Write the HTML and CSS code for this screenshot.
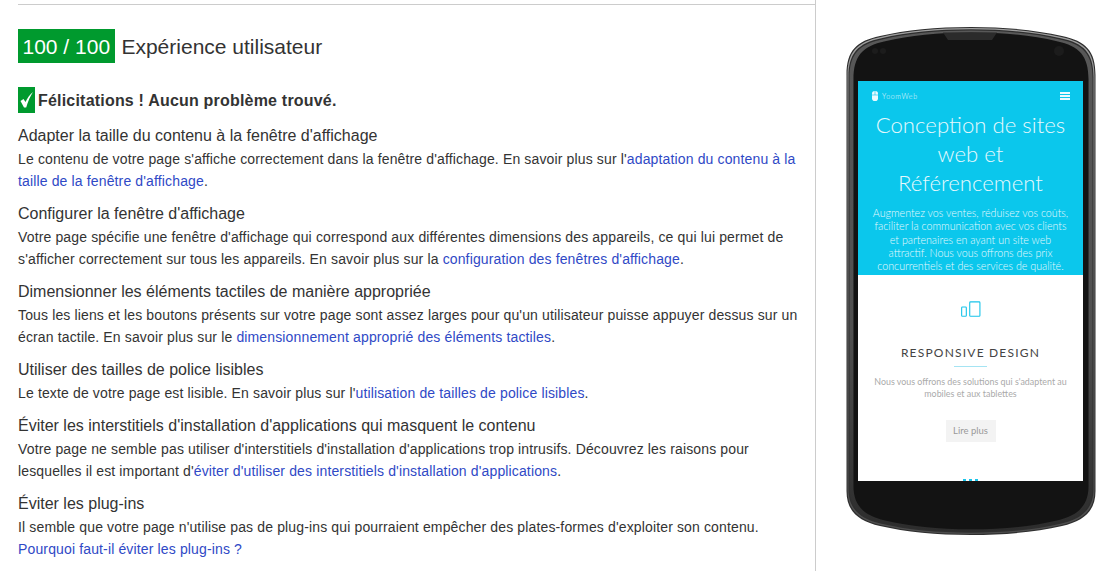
FILE: index.html
```html
<!DOCTYPE html>
<html lang="fr">
<head>
<meta charset="utf-8">
<title>Expérience utilisateur</title>
<link rel="stylesheet" href="styles.css">
</head>
<body>
<div class="page">
  <main class="report">
    <h2 class="score-title"><span class="score">100 / 100</span> Expérience utilisateur</h2>
    <p class="congrats"><span class="check"><svg width="17" height="26" viewBox="0 0 17 26"><path d="M2.500 14 L5.500 12 L7.500 15 C9 11.500 11.500 8 15 5 C12.500 9 10 14 8.200 20.500 L6 20.500 Z" fill="#fff"/></svg></span><strong>Félicitations ! Aucun problème trouvé.</strong></p>
    <section class="rule">
      <h3>Adapter la taille du contenu à la fenêtre d'affichage</h3>
      <p>Le contenu de votre page s'affiche correctement dans la fenêtre d'affichage. En savoir plus sur l'<a href="#">adaptation du contenu à la taille de la fenêtre d'affichage</a>.</p>
    </section>
    <section class="rule">
      <h3>Configurer la fenêtre d'affichage</h3>
      <p>Votre page spécifie une fenêtre d'affichage qui correspond aux différentes dimensions des appareils, ce qui lui permet de s'afficher correctement sur tous les appareils. En savoir plus sur la <a href="#">configuration des fenêtres d'affichage</a>.</p>
    </section>
    <section class="rule">
      <h3>Dimensionner les éléments tactiles de manière appropriée</h3>
      <p>Tous les liens et les boutons présents sur votre page sont assez larges pour qu'un utilisateur puisse appuyer dessus sur un écran tactile. En savoir plus sur le <a href="#">dimensionnement approprié des éléments tactiles</a>.</p>
    </section>
    <section class="rule">
      <h3>Utiliser des tailles de police lisibles</h3>
      <p>Le texte de votre page est lisible. En savoir plus sur l'<a href="#">utilisation de tailles de police lisibles</a>.</p>
    </section>
    <section class="rule">
      <h3>Éviter les interstitiels d'installation d'applications qui masquent le contenu</h3>
      <p>Votre page ne semble pas utiliser d'interstitiels d'installation d'applications trop intrusifs. Découvrez les raisons pour lesquelles il est important d'<a href="#">éviter d'utiliser des interstitiels d'installation d'applications</a>.</p>
    </section>
    <section class="rule">
      <h3>Éviter les plug-ins</h3>
      <p>Il semble que votre page n'utilise pas de plug-ins qui pourraient empêcher des plates-formes d'exploiter son contenu.<br><a href="#">Pourquoi faut-il éviter les plug-ins ?</a></p>
    </section>
  </main>
  <aside class="preview">
    <div class="phone">
      <svg class="phone-body" width="250" height="510" viewBox="0 0 250 510">
        <defs>
          <path id="shell" d="M0.500 48 C0.500 24 10 14 34 9 C60 3 90 0 125 0 C160 0 190 3 216 9 C240 14 249.500 24 249.500 48 L249.500 464 C249.500 484 238 494 216 499 C190 505 160 508 125 508 C90 508 60 505 34 499 C12 494 0.500 484 0.500 464 Z"/>
          <linearGradient id="edge" x1="0" x2="0" y1="0" y2="1">
            <stop offset="0" stop-color="#a0a0a0"/><stop offset="0.5" stop-color="#707070"/><stop offset="1" stop-color="#4c4c4c"/>
          </linearGradient>
          <linearGradient id="side" x1="0" x2="0" y1="0" y2="1">
            <stop offset="0" stop-color="#585858"/><stop offset="0.6" stop-color="#505050"/><stop offset="1" stop-color="#2c2c2c"/>
          </linearGradient>
        </defs>
        <use href="#shell" fill="#2e2e2e"/>
        <use href="#shell" fill="url(#edge)" transform="translate(1 1) scale(.992 .996)"/>
        <use href="#shell" fill="#2e2e2e" transform="translate(2 2.300) scale(.984 .991)"/>
        <use href="#shell" fill="url(#side)" transform="translate(3 3.600) scale(.976 .986)"/>
        <use href="#shell" fill="#131313" transform="translate(7 5.500) scale(.944 .978)"/>
        <path d="M97 5.500 H151 L146 13 H102 Z" fill="#2b2b2b"/>
        <circle cx="29" cy="24" r="3" fill="#1c1c1c"/><circle cx="37" cy="24" r="3" fill="#1c1c1c"/><circle cx="213" cy="24" r="5" fill="#1c1c1c"/>
      </svg>
      <div class="screen">
        <div class="hero">
          <div class="site-nav">
            <span class="logo"><svg width="6" height="10" viewBox="0 0 6 10"><rect width="6" height="10" rx="2.800" fill="#eafaff"/><path d="M0 4H6M3 0V4" stroke="#0bc7ec" stroke-width=".6"/></svg><span>YoomWeb</span></span>
            <span class="burger"><i></i><i></i><i></i></span>
          </div>
          <h1>Conception de sites web et Référencement</h1>
          <p>Augmentez vos ventes, réduisez vos coûts, faciliter la communication avec vos clients et partenaires en ayant un site web attractif. Nous vous offrons des prix concurrentiels et des services de qualité.</p>
        </div>
        <div class="feature">
          <svg class="devices" width="24" height="20" viewBox="0 0 24 20" fill="none" stroke="#19c4ea" stroke-width="1.300"><rect x="10.500" y="1" width="12" height="17" rx="1"/><rect x="1" y="7" width="5.500" height="11" rx="1"/></svg>
          <h4>RESPONSIVE DESIGN</h4>
          <span class="rule-line"></span>
          <p>Nous vous offrons des solutions qui s'adaptent au mobiles et aux tablettes</p>
          <span class="more">Lire plus</span>
          <span class="next-icon"></span>
        </div>
      </div>
    </div>
  </aside>
</div>
</body>
</html>
```
FILE: styles.css
```css
* { box-sizing: border-box; }
html, body { margin: 0; height: 100%; overflow: hidden; background: #fff; }
body { font-family: "Liberation Sans", Arial, sans-serif; color: #333; }
.page { display: flex; width: 1108px; height: 571px; }
.report { width: 816px; flex: none; height: 571px; padding: 4px 12px 0 18px; border-right: 1px solid #ccc; overflow: hidden; }
.report::before { content: ""; display: block; height: 1px; background: #ccc; margin-right: -12px; }
.score-title { margin: 24px 0 0; font-size: 21px; font-weight: 400; line-height: 36px; white-space: nowrap; }
.score { display: inline-block; height: 34px; background: #009a2e; color: #fff; padding: 0 4.500px; margin-right: 1px; }
.congrats { margin: 22px 0 0; display: flex; align-items: center; height: 26px; font-size: 16px; letter-spacing: .2px; }
.congrats strong { padding-top: 2px; }
.check { width: 17px; height: 26px; background: #009a2e; display: flex; align-items: center; justify-content: center; margin-right: 3px; }
.rule { margin-top: 12px; }
.congrats + .rule { margin-top: 13px; }
.rule h3 { margin: 0; font-size: 16px; font-weight: 400; line-height: 20px; }
.rule p { margin: 2px 0 0; font-size: 14px; line-height: 22px; letter-spacing: .14px; }
a { color: #2f49c6; text-decoration: none; }
.preview { flex: 1; }
.phone { width: 250px; height: 510px; margin: 27px 0 0 30px; padding: 54px 13px 56px 12px; position: relative; }
.phone-body { position: absolute; left: 0; top: 0; }
.screen { position: relative; height: 400px; background: #fff; overflow: hidden; display: flex; flex-direction: column; font-family: "Lato", sans-serif; }
.hero { background: #0bc7ec; height: 194px; flex: none; color: #e6f9fd; text-align: center; padding: 0 13px; }
.site-nav { display: flex; justify-content: space-between; align-items: center; height: 28px; padding: 2px 0 0 1px; }
.logo { display: flex; align-items: center; gap: 4px; font-size: 7px; letter-spacing: .7px; font-weight: 300; }
.burger { display: flex; flex-direction: column; gap: 1px; width: 10px; }
.burger i { display: block; height: 2px; background: #eafaff; }
.hero h1 { margin: 1px -6px 0; font-size: 22.200px; line-height: 29px; font-weight: 300; }
.hero p { margin: 9px 0 0; font-size: 10.700px; line-height: 13.300px; font-weight: 300; }
.feature { display: flex; flex-direction: column; align-items: center; text-align: center; padding-top: 26px; flex: 1; min-height: 0; overflow: hidden; }
.feature h4 { margin: 27px 0 0; font-size: 12px; font-weight: 400; letter-spacing: 1.200px; color: #444; line-height: 16px; }
.rule-line { width: 33px; height: 1px; flex: none; background: #a5e4f3; margin-top: 5px; }
.feature p { margin: 9px 8px 0; font-size: 8.900px; line-height: 12px; color: #aaa; }
.more { margin-top: 20px; width: 50px; height: 22px; flex: none; background: #f3f3f3; color: #999; font-size: 9.500px; line-height: 22px; }
.next-icon { margin-top: 37px; width: 15px; height: 2px; flex: none; background: repeating-linear-gradient(90deg, #19c4ea 0 3px, #fff 3px 6px); }
```
